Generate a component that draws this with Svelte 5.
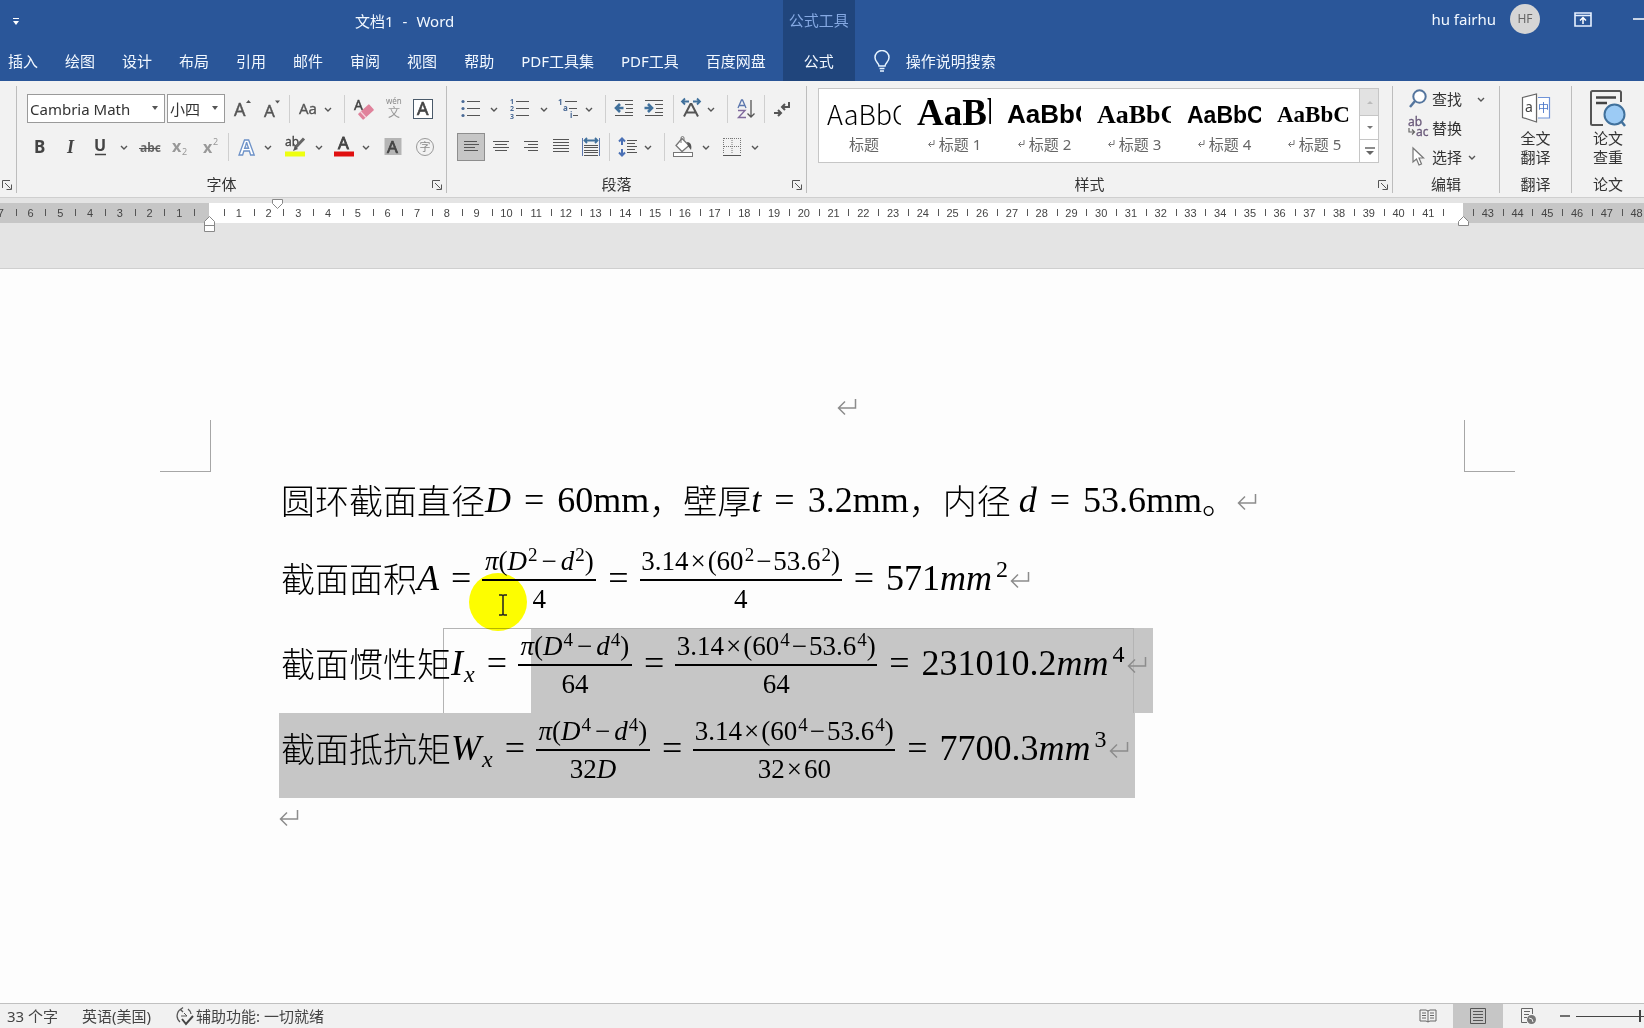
<script>
  const tabs = ['插入', '绘图', '设计', '布局', '引用', '邮件', '审阅', '视图', '帮助', 'PDF工具集', 'PDF工具', '百度网盘'];

  const lines = (rows) =>
    rows.map(([x1, x2, y]) => `<path d="M${x1} ${y}.5H${x2}" stroke="#555" fill="none"/>`).join('');

  const icons = {
    chev: '<path d="M9 11l3 3 3-3" fill="none" stroke="#555" stroke-width="1.4"/>',
    sep: '<path d="M12.5-2V26" stroke="#cfcfcf"/>',
    gap: '',
    grow: '<text x="3" y="19" font-size="18" fill="#555" stroke="#555" stroke-width=".4">A</text><path d="M15 6l2.500-3 2.500 3z" fill="#555"/>',
    shrink: '<text x="4" y="20" font-size="17" fill="#555" stroke="#555" stroke-width=".4">A</text><path d="M15 3.500h5L17.500 6.500z" fill="#555"/>',
    aa: '<text x="3" y="17" font-size="15" fill="#555" stroke="#555" stroke-width=".3">Aa</text>',
    eraser: '<text x="2" y="13" font-size="14" fill="#444" stroke="#444" stroke-width=".4">A</text><rect x="6.500" y="11" width="15" height="8" rx="1" transform="rotate(-42 14 15)" fill="#e0829b"/><path d="M8.500 14.500l5.500 6" stroke="#f6d3dc" stroke-width="1.200"/>',
    pinyin: '<text x="4" y="7" font-size="8" fill="#888">wén</text><text x="6" y="20" font-size="12" fill="#999">文</text>',
    boxed: '<rect x="2.500" y="2.500" width="19" height="19" fill="#fff" stroke="#4a5a6a"/><text x="6" y="18" font-size="18" fill="#444" stroke="#444" stroke-width=".6">A</text>',
    bold: '<text x="6" y="18" font-size="17" font-weight="700" fill="#444">B</text>',
    italic: '<text x="8" y="18" font-size="18" font-weight="700" font-style="italic" font-family="Liberation Serif" fill="#444">I</text>',
    under: '<text x="6" y="16" font-size="16" font-weight="700" fill="#444">U</text><path d="M7 19.500h11" stroke="#444" stroke-width="1.500"/>',
    strike: '<text x="2" y="17" font-size="12" font-weight="700" fill="#666">abc</text><path d="M1 13.500h21" stroke="#555"/>',
    sub: '<text x="4" y="17" font-size="16" font-weight="700" fill="#999">x</text><text x="14" y="20" font-size="9" fill="#999">2</text>',
    sup: '<text x="4" y="18" font-size="16" font-weight="700" fill="#999">x</text><text x="14" y="10" font-size="9" fill="#999">2</text>',
    effect: '<text x="4" y="20" font-size="22" font-weight="700" fill="#fff" stroke="#6f93c8" stroke-width="1.300">A</text>',
    hilite: '<text x="2" y="11" font-size="12" fill="#444" stroke="#444" stroke-width=".3">ab</text><path d="M21 3.500L12 13" stroke="#666" stroke-width="3"/><path d="M12 11l3 3-5 2z" fill="#555"/><rect x="2" y="16.500" width="20" height="5" fill="#eeff10"/>',
    color: '<text x="6" y="14" font-size="17" fill="#444" stroke="#444" stroke-width=".8">A</text><rect x="2" y="16.500" width="20" height="5" fill="#e01010"/>',
    shade: '<rect x="3.500" y="3" width="17" height="17" fill="#b5b5b5"/><text x="6" y="18" font-size="17" fill="#444" stroke="#444" stroke-width=".7">A</text>',
    circled: '<circle cx="12" cy="12" r="8.500" fill="none" stroke="#999"/><text x="6.500" y="16" font-size="11" fill="#888">字</text>',
    bullets: '<g fill="#4a6a96"><circle cx="4" cy="4.500" r="1.600"/><circle cx="4" cy="11.500" r="1.600"/><circle cx="4" cy="18.500" r="1.600"/></g>' + lines([[8, 21, 4], [8, 21, 11], [8, 21, 18]]),
    numbers: '<g font-size="7" fill="#4a6a96" font-weight="700"><text x="2" y="7">1</text><text x="2" y="14">2</text><text x="2" y="22">3</text></g>' + lines([[8, 21, 4], [8, 21, 11], [8, 21, 18]]),
    multi: '<g font-size="8" fill="#4a6a96" font-weight="700"><text x="2" y="8">1</text><text x="7" y="14">a</text><text x="14" y="21">i</text></g>' + lines([[9, 21, 4], [13, 21, 11], [17, 22, 18]]),
    outdent: '<path d="M8 7L4 11l4 4M4.500 11h7" fill="none" stroke="#41719c" stroke-width="2.600"/>' + lines([[3, 21, 3], [13, 21, 7], [14, 21, 11], [13, 21, 15], [3, 21, 18]]),
    indent: '<path d="M6 7l4 4-4 4M9.500 11h-7" fill="none" stroke="#41719c" stroke-width="2.600"/>' + lines([[3, 21, 3], [13, 21, 7], [14, 21, 11], [13, 21, 15], [3, 21, 18]]),
    layout: '<path d="M5 19.500L11.500 7h1L19 19.500M7.500 15.500h9" fill="none" stroke="#555" stroke-width="2"/><path d="M6 1.500L3 4.500l3 3M3 4.500h7M18 1.500l3 3-3 3M21 4.500h-7" fill="none" stroke="#41719c" stroke-width="1.800"/>',
    sort: '<path d="M4 11L7.500 3h1L12 11M5.500 8.500h5" fill="none" stroke="#5b76ad" stroke-width="1.300"/><path d="M4 13.500h7L4.500 20.500h7.500" fill="none" stroke="#806a9c" stroke-width="1.400"/><path d="M17 3v17M13.500 16.500L17 20l3.500-3.500" fill="none" stroke="#555" stroke-width="1.300"/>',
    marks: '<path d="M19 5v5h-6M15 7l-3 3 3 3" fill="none" stroke="#555" stroke-width="2"/><path d="M4 16h6M8 13l3 3-3 3" fill="none" stroke="#555" stroke-width="2"/>',
    left: lines([[5, 18, 6], [5, 20, 9], [5, 16, 12], [5, 19, 15]]),
    center: lines([[4, 20, 6], [6, 18, 9], [4, 20, 12], [6, 18, 15]]),
    right: lines([[5, 19, 6], [9, 19, 9], [5, 19, 12], [9, 19, 15]]),
    justify: lines([[4, 20, 4], [4, 20, 7], [4, 20, 10], [4, 20, 13], [4, 20, 16]]),
    distribute: '<path d="M3.500 3v18M20.500 3v18" stroke="#5b76ad"/><path d="M8 3L5.500 5.500 8 8M16 3l2.500 2.500L16 8M6 5.500h12" fill="none" stroke="#41719c" stroke-width="1.800"/>' + lines([[5, 19, 10], [5, 19, 12], [5, 19, 15], [5, 19, 17], [5, 19, 20]]),
    spacing: '<path d="M6 4v6M3 6.500L6 3.500l3 3M6 14v6M3 17.500l3 3 3-3" fill="none" stroke="#4a70b5" stroke-width="2"/>' + lines([[11, 21, 5], [11, 19, 8], [11, 21, 11], [11, 19, 14], [11, 21, 17]]),
    bucket: '<path d="M11 3.500l7 7-7 6-6-6z" fill="#fff" stroke="#777" stroke-width="1.300"/><path d="M10 8V3a1.500 1.500 0 013 0v2" fill="none" stroke="#777"/><path d="M16 7c4 0 5 4 4 8l-3-4z" fill="#555"/><rect x="2.500" y="17.500" width="19" height="4" fill="#fff" stroke="#777"/>',
    borders: '<path d="M4 3.500h16M4 11.500h16M3.500 3v16M12 3v16M20.500 3v16" stroke="#777" stroke-dasharray="1 1" fill="none"/><path d="M3 20.500h18" stroke="#555"/>',
    find: '<circle cx="13.500" cy="9.500" r="6.200" fill="#fff" stroke="#54759e" stroke-width="2"/><path d="M9 14l-5 6" stroke="#54759e" stroke-width="2.500"/>',
    replace: '<text x="2" y="10" font-size="12" fill="#6b5b7b" stroke="#6b5b7b" stroke-width=".3">ab</text><text x="10" y="20" font-size="12" fill="#6b5b7b" stroke="#6b5b7b" stroke-width=".3">ac</text><path d="M3 12v4h5M6 13.500L8.500 16 6 18.500" fill="none" stroke="#666" stroke-width="1.200"/>',
    pointer: '<path d="M7 3v14l3.500-3 2.500 6 2.500-1-2.500-6h4.500z" fill="#fff" stroke="#777" stroke-width="1.200"/>'
  };

  const fontTop = [['grow', 30, '增大字号'], ['shrink', 28, '减小字号'], ['sep', 6], ['aa', 32, '更改大小写'], ['chev', 8], ['gap', 8], ['sep', 8], ['eraser', 32, '清除格式'], ['pinyin', 28, '拼音指南'], ['boxed', 30, '字符边框']];
  const fontBottom = [['bold', 28, '加粗'], ['italic', 34, '倾斜'], ['under', 24, '下划线'], ['chev', 24], ['strike', 28, '删除线'], ['sub', 32, '下标'], ['sup', 30, '上标'], ['sep', 4], ['effect', 34, '文本效果'], ['chev', 8], ['gap', 4], ['hilite', 38, '突出显示'], ['chev', 10], ['gap', 2], ['color', 36, '字体颜色'], ['chev', 8], ['gap', 4], ['shade', 38, '字符底纹'], ['gap', 4], ['circled', 18, '带圈字符']];
  const paraTop = [['bullets', 27, '项目符号'], ['chev', 20], ['numbers', 32, '编号'], ['chev', 16], ['multi', 32, '多级列表'], ['chev', 10], ['gap', 6], ['sep', 10], ['outdent', 28, '减少缩进'], ['indent', 32, '增加缩进'], ['sep', 6], ['layout', 30, '中文版式'], ['chev', 10], ['gap', 6], ['sep', 10], ['sort', 28, '排序'], ['sep', 8], ['marks', 28, '编辑标记']];
  const paraBottom = [['left', 28, '左对齐', true], ['center', 32, '居中'], ['right', 28, '右对齐'], ['justify', 32, '两端对齐'], ['distribute', 28, '分散对齐'], ['sep', 8], ['spacing', 30, '行距'], ['chev', 10], ['gap', 6], ['sep', 10], ['bucket', 28, '底纹'], ['chev', 18], ['borders', 34, '边框'], ['chev', 12]];

  const styles = [
    { name: '标题', look: 'light', mark: false },
    { name: '标题 1', look: 'h1', mark: true },
    { name: '标题 2', look: 'h2', mark: true },
    { name: '标题 3', look: 'h3', mark: true },
    { name: '标题 4', look: 'h4', mark: true },
    { name: '标题 5', look: 'h5', mark: true }
  ];

  // Ruler scale: character units counted from the left text margin.
  const origin = 209;
  const unit = 29.74;
  const at = (n) => origin + n * unit;
  const numbers = Array.from({ length: 56 }, (_, i) => i - 7).filter((n) => n !== 0 && n !== 42);
  const ticks = Array.from({ length: 56 }, (_, i) => i - 6.5);
</script>

{#snippet icon(name)}
  <svg class="ico" width="24" height="24" viewBox="0 0 24 24" aria-hidden="true">{@html icons[name]}</svg>
{/snippet}

{#snippet tools(items)}
  {#each items as [name, width, label, on]}
    {#if name === 'sep' || name === 'gap'}
      <span class="cell" style="width:{width}px">{@render icon(name)}</span>
    {:else}
      <button class="cell" class:on aria-label={label ?? '更多选项'} style="width:{width}px">{@render icon(name)}</button>
    {/if}
  {/each}
{/snippet}

{#snippet launcher()}
  <button class="launcher" aria-label="对话框启动器">
    <svg width="10" height="10" viewBox="0 0 10 10"><path d="M.5 8V.5H8M3 3l5.500 5.500M9.500 4.500v5h-5" fill="none" stroke="#555" /></svg>
  </button>
{/snippet}

{#snippet ret()}
  <svg class="ret" width="20" height="20" viewBox="0 0 20 20" aria-hidden="true"><path d="M18.500 2v9H2M8 4.500L1.500 11 8 17.500" fill="none" stroke="#8c8c8c" stroke-width="1.500" /></svg>
{/snippet}

{#snippet symbolic(p, den)}
  <span class="frac sym"><span class="num"><i>π</i>(<i>D</i><sup>{p}</sup><b class="op">−</b><i>d</i><sup>{p}</sup>)</span><span class="bar"></span><span class="num">{@html den}</span></span>
{/snippet}

{#snippet numeric(p, den)}
  <span class="frac val"><span class="num">3.14<b class="op">×</b>(60<sup>{p}</sup><b class="op">−</b>53.6<sup>{p}</sup>)</span><span class="bar"></span><span class="num">{@html den}</span></span>
{/snippet}

<div class="app">
  <header>
    <button class="quick" aria-label="自定义快速访问工具栏">
      <svg width="8" height="10" viewBox="0 0 8 10"><path d="M1 1.500h6" stroke="#fff" /><path d="M1 4h6L4 8z" fill="#fff" /></svg>
    </button>
    <div class="title"><span>文档1</span><span>-</span><span>Word</span></div>
    <div class="account">
      <span>hu fairhu</span>
      <span class="avatar">HF</span>
      <button aria-label="功能区显示选项">
        <svg width="18" height="15" viewBox="0 0 18 15"><path d="M1 1h16v13H1zM1 3.500h16" fill="none" stroke="#e6f0ff" stroke-width="1.600" /><path d="M9 12V6M6 8.500L9 5.500l3 3" fill="none" stroke="#fff" stroke-width="1.500" /></svg>
      </button>
      <button class="min" aria-label="最小化"><svg width="14" height="2" viewBox="0 0 14 2"><path d="M0 1h14" stroke="#fff" stroke-width="1.500" /></svg></button>
    </div>
    <nav>
      {#each tabs as tab}<button>{tab}</button>{/each}
      <div class="context"><span>公式工具</span><button>公式</button></div>
      <button class="tell">
        <svg width="16" height="22" viewBox="0 0 16 22"><path d="M5 16c0-3-4-4-4-8.500a7 7 0 0114 0c0 4.500-4 5.500-4 8.500zM5.500 18.500h5M6 21h4" fill="none" stroke="#e6f4ff" stroke-width="1.500" /></svg>
        操作说明搜索
      </button>
    </nav>
  </header>

  <section class="ribbon">
    <div class="group clip">
      <div class="foot"><span class="cap"></span>{@render launcher()}</div>
    </div>

    <div class="group font">
      <div class="row">
        <label class="combo wide"><select aria-label="字体"><option>Cambria Math</option></select><svg width="8" height="5" viewBox="0 0 8 5"><path d="M1 0h6L4 4z" fill="#555" /></svg></label>
        <label class="combo"><select aria-label="字号"><option>小四</option></select><svg width="8" height="5" viewBox="0 0 8 5"><path d="M1 0h6L4 4z" fill="#555" /></svg></label>
        {@render tools(fontTop)}
      </div>
      <div class="row">{@render tools(fontBottom)}</div>
      <div class="foot"><span class="cap">字体</span>{@render launcher()}</div>
    </div>

    <div class="group para">
      <div class="row">{@render tools(paraTop)}</div>
      <div class="row">{@render tools(paraBottom)}</div>
      <div class="foot"><span class="cap">段落</span>{@render launcher()}</div>
    </div>

    <div class="group styles">
      <div class="gallery">
        {#each styles as s}
          <button class="style">
            <span class="preview {s.look}">AaBbC</span>
            <span class="name">
              {#if s.mark}<svg width="8" height="8" viewBox="0 0 8 8"><path d="M7 0v4.500H2M4 2L1.500 4.500 4 7" fill="none" stroke="#777" /></svg>{/if}
              {s.name}
            </span>
          </button>
        {/each}
        <div class="scroll">
          <button class="off" aria-label="上一行"><svg width="8" height="5" viewBox="0 0 8 5"><path d="M1 4h6L4 1z" fill="#bbb" /></svg></button>
          <button aria-label="下一行"><svg width="8" height="5" viewBox="0 0 8 5"><path d="M1 1h6L4 4z" fill="#777" /></svg></button>
          <button aria-label="其他样式"><svg width="10" height="9" viewBox="0 0 10 9"><path d="M0 1h10" stroke="#666" stroke-width="1.500" /><path d="M1 4h8L5 8z" fill="#666" /></svg></button>
        </div>
      </div>
      <div class="foot"><span class="cap">样式</span>{@render launcher()}</div>
    </div>

    <div class="group edit">
      <button class="cmd">{@render icon('find')}<span>查找</span><span class="far">{@render icon('chev')}</span></button>
      <button class="cmd">{@render icon('replace')}<span>替换</span></button>
      <button class="cmd">{@render icon('pointer')}<span>选择</span>{@render icon('chev')}</button>
      <div class="foot"><span class="cap">编辑</span></div>
    </div>

    <div class="group big">
      <button class="tall">
        <svg width="30" height="38" viewBox="0 0 30 38"><path d="M1.500 8.500L15.500 5v28L1.500 28.500z" fill="#fff" stroke="#666" stroke-width="1.200" /><path d="M17 8.500h11.500V29H17" fill="#fff" stroke="#6f93d8" stroke-width="1.200" /><text x="4" y="23" font-size="14" fill="#444">a</text><text x="17" y="23" font-size="11" fill="#4a76c8">中</text></svg>
        <span>全文</span><span>翻译</span>
      </button>
      <div class="foot"><span class="cap">翻译</span></div>
    </div>

    <div class="group big last">
      <button class="tall">
        <svg width="36" height="38" viewBox="0 0 36 38"><path d="M13 36H2.500a1.500 1.500 0 01-1.500-1.500V3.500A1.500 1.500 0 012.500 2h27A1.500 1.500 0 0131 3.500V13" fill="none" stroke="#555" stroke-width="2" /><path d="M6 8.500h20M6 14h11" stroke="#444" stroke-width="2.500" /><path d="M31 32l4 5" stroke="#41719c" stroke-width="2.500" /><circle cx="24.500" cy="25.500" r="10" fill="#9ccbf5" stroke="#41719c" stroke-width="2" /></svg>
        <span>论文</span><span>查重</span>
      </button>
      <div class="foot"><span class="cap">论文</span></div>
    </div>
  </section>

  <div class="rule">
    <svg width="100%" height="36" aria-label="标尺">
      <rect x="0" y="5" width="100%" height="20" fill="#c6c6c6" />
      <rect x="209" y="5" width="1254" height="20" fill="#fff" />
      {#each numbers as n}<text x={at(n)} y="19">{Math.abs(n)}</text>{/each}
      {#each ticks as t}<rect x={Math.round(at(t))} y="11" width="1" height="7" fill="#555" />{/each}
      <g fill="#fff" stroke="#888">
        <path d="M272.500 1.500h10v4l-5 5-5-5z" />
        <path d="M204.500 33.500v-10l5-5 5 5v10zM204.500 27.500h10" />
        <path d="M1458.500 27.500v-4l5-5 5 5v4z" />
      </g>
    </svg>
  </div>

  <main>
    <div class="headmark">{@render ret()}</div>
    <div class="corners"><span class="corner"></span><span class="corner end"></span></div>

    <div class="body">
      <p class="line first">
        <span class="cn">圆环截面直径</span><i>D</i><span class="eq">=</span><span>60mm</span><span class="cn">，</span>
        <span class="cn">壁厚</span><i>t</i><span class="eq">=</span><span>3.2mm</span><span class="cn">，</span>
        <span class="cn">内径</span><i class="sp">d</i><span class="eq">=</span><span>53.6mm</span><span class="cn">。</span>{@render ret()}
      </p>
      <p class="line">
        <span class="cn">截面面积</span><i>A</i><span class="eq">=</span>{@render symbolic('2', '4')}<span class="eq">=</span>{@render numeric('2', '4')}<span class="eq">=</span><span>571</span><i>mm</i><sup>2</sup>{@render ret()}
        <span class="spot">
          <svg width="10" height="22" viewBox="0 0 10 22"><path d="M1 1h3l1 1 1-1h3M5 2v18M1 21h3l1-1 1 1h3" fill="none" stroke="#222" stroke-width="1.500" /></svg>
        </span>
      </p>
      <p class="line part">
        <span class="cn">截面惯性矩</span><i>I</i><sub>x</sub><span class="eq">=</span>{@render symbolic('4', '64')}<span class="eq">=</span>{@render numeric('4', '64')}<span class="eq">=</span><span>231010.2</span><i>mm</i><sup>4</sup>{@render ret()}
      </p>
      <p class="line picked">
        <span class="cn">截面抵抗矩</span><i>W</i><sub>x</sub><span class="eq">=</span>{@render symbolic('4', '32<i>D</i>')}<span class="eq">=</span>{@render numeric('4', '32<b class="op">×</b>60')}<span class="eq">=</span><span>7700.3</span><i>mm</i><sup>3</sup>{@render ret()}
      </p>
      <p class="empty">{@render ret()}</p>
    </div>
  </main>

  <footer>
    <span>33 个字</span>
    <span class="lang">英语(美国)</span>
    <svg width="20" height="20" viewBox="0 0 20 20"><path d="M6 3a8 8 0 00-1 13M8 1.500l-2.500 2L8 6M13 3a8 8 0 013 5" fill="none" stroke="#555" stroke-width="1.300" /><path d="M6 10h6M9 7l3 3" fill="none" stroke="#555" /><path d="M7 13l4 5 7-8" fill="none" stroke="#444" stroke-width="2" /></svg>
    <span>辅助功能: 一切就绪</span>
    <div class="views">
      <button aria-label="阅读视图"><svg width="18" height="16" viewBox="0 0 18 16"><path d="M1 2h6l2 1 2-1h6v11h-6l-2 1-2-1H1zM9 3v11M3 5h4M3 7.500h4M3 10h4M11 5h4M11 7.500h4M11 10h4" fill="none" stroke="#666" /></svg></button>
      <button class="on" aria-label="页面视图"><svg width="18" height="16" viewBox="0 0 18 16"><path d="M1.500.5h15v15h-15zM4 3.500h10M4 6.500h10M4 9.500h10M4 12.500h10" fill="none" stroke="#555" /></svg></button>
      <button aria-label="Web 版式视图"><svg width="18" height="18" viewBox="0 0 18 18"><path d="M8 15.500H2.500V1.500h11V7M5 4.500h6M5 7.500h5M5 10.500h3" fill="none" stroke="#666" /><circle cx="12.500" cy="12.500" r="4.500" fill="#777" /><path d="M10 11l3 1 1 3" fill="none" stroke="#eee" /></svg></button>
      <button class="zoomout" aria-label="缩小"><svg width="10" height="2" viewBox="0 0 10 2"><path d="M0 1h10" stroke="#444" stroke-width="1.500" /></svg></button>
      <input type="range" aria-label="缩放" min="0" max="100" value="95" />
    </div>
  </footer>
</div>

<style>
  :global(body) { margin: 0; }
  .app {
    display: flex; flex-direction: column; min-height: 100vh; overflow: hidden;
    background: #e4e4e4; color: #333;
    font: 15px/20px "Noto Sans", "Noto Sans CJK SC", sans-serif;
  }
  button, select, input { font: inherit; color: inherit; border: 0; padding: 0; margin: 0; background: none; }
  button { display: flex; align-items: center; justify-content: center; white-space: nowrap; }
  svg { flex: none; }

  header {
    display: grid; grid-template-columns: auto 1fr auto; grid-template-rows: 40px 41px;
    background: #2a5699; color: #f2f8ff;
  }
  .quick { width: 32px; height: 44px; }
  .title { display: flex; gap: 9px; align-items: center; padding: 2px 0 0 323px; }
  .account { display: flex; align-items: center; gap: 14px; height: 38px; overflow: hidden; }
  .avatar {
    width: 30px; height: 30px; border-radius: 50%; background: #d5d5d5; color: #666;
    font-size: 12px; line-height: 30px; text-align: center;
  }
  .account button { width: 18px; margin-left: 20px; }
  .account .min { width: 11px; margin-left: 27px; justify-content: flex-start; overflow: hidden; }
  nav { grid-column: 1 / -1; display: flex; gap: 27px; padding-left: 8px; }
  nav > button { height: 42px; }
  .context {
    width: 72px; height: 81px; margin: -40px 0 0 -10px; background: #20457c; flex: none;
    display: grid; grid-template-rows: 39px 43px; justify-items: center; align-items: center;
  }
  .context span { color: #84a8e2; }
  nav .tell { gap: 16px; margin-left: -8px; }

  .ribbon { display: flex; height: 117px; background: #f2f2f2; border-bottom: 1px solid #cfcfcf; box-sizing: border-box; }
  .group {
    display: flex; flex-direction: column; flex: none; box-sizing: border-box;
    margin: 5px 0 4px; padding-top: 8px; border-right: 1px solid #bdbdbd;
  }
  .clip { width: 17px; }
  .font { width: 430px; }
  .para { width: 360px; }
  .styles { flex: 1 1 560px; min-width: 0; padding-top: 2px; }
  .edit { width: 107px; padding-top: 0; }
  .big { width: 72px; padding-top: 3px; }
  .last { border-right: 0; }
  .row { display: flex; align-items: center; height: 29px; margin: 0 0 10px 10px; }
  .font .row + .row { margin-left: 9px; }
  .row + .row { margin-bottom: 0; height: 28px; }
  .cell { display: flex; align-items: center; justify-content: center; flex: none; height: 28px; }
  .cell.on { background: #c6c6c6; box-shadow: inset 0 0 0 1px #8e8e8e; }
  .ico { overflow: visible; }
  .combo {
    display: flex; align-items: center; box-sizing: border-box; width: 58px; height: 29px; margin-right: 3px;
    background: #fff; border: 1px solid #9a9a9a; padding-right: 5px;
  }
  .combo.wide { width: 138px; margin-right: 2px; }
  .combo select { appearance: none; flex: 1; min-width: 0; padding-left: 2px; height: 27px; outline: 0; }
  .combo svg { pointer-events: none; }
  .foot { display: flex; margin-top: auto; height: 15px; align-items: flex-start; }
  .cap { flex: 1; text-align: center; line-height: 12px; }
  .launcher { width: 10px; height: 10px; margin: 2px 4px 0 6px; }
  .clip .launcher { margin-left: 0; }

  .gallery {
    display: flex; height: 75px; margin: 0 13px 0 11px; box-sizing: border-box; overflow: hidden;
    background: #fff; border: 1px solid #c6c6c6;
  }
  .style { flex: 1 0 90px; flex-direction: column; justify-content: flex-start; }
  .preview { width: 74px; height: 43px; overflow: hidden; text-align: left; color: #000; }
  .light { font: 300 27px/50px "Noto Sans CJK SC", sans-serif; }
  .h1 { font: 700 37px/48px "Liberation Serif", serif; }
  .h2 { font: 700 26px/50px "Liberation Sans", sans-serif; }
  .h3 { font: 700 26px/52px "Liberation Serif", serif; }
  .h4 { font: 700 23px/52px "Liberation Sans", sans-serif; }
  .h5 { font: 700 23px/52px "Liberation Serif", serif; }
  .name { display: flex; align-items: center; gap: 4px; height: 24px; color: #666; }
  .scroll { display: grid; grid-template-rows: 26px 24px 23px; width: 19px; flex: none; border-left: 1px solid #c6c6c6; }
  .scroll button + button { border-top: 1px solid #c6c6c6; }
  .off { background: #e2e2e2; }

  .cmd { justify-content: flex-start; height: 26px; margin: 0 0 3px 13px; }
  .cmd span { margin-left: 2px; }
  .cmd > .ico:last-child { margin-left: -2px; }
  .cmd .far { display: flex; margin-left: 7px; }
  .tall { flex-direction: column; line-height: 19px; }
  .tall svg { margin-bottom: 2px; }

  .rule { height: 71px; border-bottom: 1px solid #cfcfcf; box-sizing: border-box; }
  .rule svg { display: block; }
  .rule text { font: 11px "Liberation Sans", sans-serif; fill: #444; text-anchor: middle; }

  main { flex: 1; background: #fdfdfd; padding: 128px 129px 0 160px; }
  .headmark { display: flex; justify-content: center; height: 23px; padding-left: 18px; }
  .corners { display: flex; justify-content: space-between; }
  .corner { width: 50px; height: 51px; border: solid #a6a6a6; border-width: 0 1px 1px 0; }
  .corner.end { border-width: 0 0 1px 1px; }
  .body { display: flex; flex-direction: column; align-items: flex-start; padding-left: 119px; }
  .line {
    display: flex; align-items: center; position: relative; box-sizing: border-box; height: 85px; margin: 0;
    padding: 0 6px 12px 2px; white-space: nowrap; color: #000; isolation: isolate;
    font: 36px/40px "Liberation Serif", serif;
  }
  .line > span:not(.frac, .spot), .line > i { margin-bottom: 4px; }
  .first { height: 71px; }
  .line > .cn { font: 300 34px/48px "Noto Sans CJK SC", sans-serif; margin-bottom: 8px; }
  .eq { margin: 0 12px; }
  .first .eq { margin: 0 13px; }
  .sp { margin-left: 8px; }
  .line sup, .line sub { font-size: 24px; line-height: 28px; }
  .line > sup { margin: 0 1px 22px 4px; }
  .line > sub { font-style: italic; margin: 18px 0 0 1px; }
  .frac { display: flex; flex-direction: column; font-size: 27px; text-align: center; }
  .sym { width: 114px; }
  .val { width: 202px; }
  .num { height: 36px; line-height: 36px; }
  .line .num sup { font-size: 19px; line-height: 1px; vertical-align: 9px; margin-left: 1px; }
  .num :global(.op) { font-weight: 400; margin: 0 2px; }
  .sym :global(.op) { margin: 0 4px; }
  .bar { height: 2px; background: #000; }
  .eq + .frac { margin-left: -1px; }
  .ret { margin-left: 1px; }
  .picked { background: #c6c6c6; }
  .part::before { content: ""; position: absolute; z-index: -1; inset: 0 0 0 252px; background: #c6c6c6; }
  .part::after { content: ""; position: absolute; z-index: -1; inset: 0 19px -2px 164px; border: 1px solid #b4b4b4; }
  .spot {
    position: absolute; left: 190px; top: 30px; width: 58px; height: 58px; border-radius: 50%;
    background: #ff0; mix-blend-mode: multiply; display: flex; align-items: center; justify-content: center;
  }
  .spot svg { margin: 6px 0 0 10px; }
  .line:has(.spot) { isolation: auto; }
  .part, .picked { z-index: 0; }
  .spot { z-index: 1; }
  .empty { margin: 10px 0 0; height: 24px; }
  .empty .ret, .headmark .ret { margin-left: 0; }

  footer {
    display: flex; align-items: center; height: 25px; padding-left: 7px; box-sizing: border-box;
    background: #f1f1f1; border-top: 1px solid #c0c0c0; color: #444;
  }
  .lang { margin: 0 24px; }
  footer svg + span { margin-left: 1px; }
  .views { display: flex; align-items: center; margin-left: auto; height: 100%; }
  .views button { width: 50px; height: 100%; }
  .views .on { background: #c6c6c6; }
  .views .zoomout { width: 10px; margin: 0 6px 0 7px; }
  input[type='range'] { appearance: none; width: 68px; height: 14px; background: linear-gradient(#444, #444) center / 100% 1px no-repeat; }
  input[type='range']::-webkit-slider-thumb { appearance: none; width: 2px; height: 12px; background: #444; }
</style>
